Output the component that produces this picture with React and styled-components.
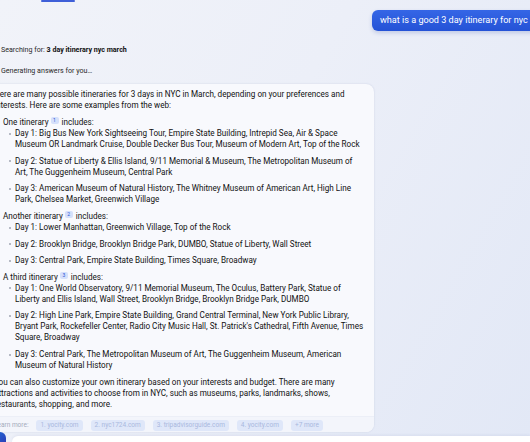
import React from 'react'
import styled, { createGlobalStyle } from 'styled-components'

const Global = createGlobalStyle`
  html, body {
    margin: 0;
    padding: 0;
  }
  body {
    font-family: Roboto, 'Liberation Sans', Arial, sans-serif;
  }
`

const Page = styled.div`
  width: 530px;
  height: 442px;
  overflow: hidden;
  position: relative;
  display: flex;
  flex-direction: column;
  background: linear-gradient(120deg, #f1f3f9 0%, #eceff8 45%, #e2e8f6 100%);
  color: #111;
`

const TabIndicator = styled.div`
  margin-left: 41px;
  width: 34px;
  height: 2px;
  border-radius: 1px;
  background: #3f5fd8;
`

const UserRow = styled.div`
  display: flex;
  padding-left: 372px;
  margin-top: 8px;
`

const Bubble = styled.div`
  flex: none;
  height: 21px;
  display: flex;
  align-items: center;
  padding: 0 10px 0 8px;
  border-radius: 6px;
  white-space: nowrap;
  font-size: 9.1px;
  color: #fff;
  background: linear-gradient(180deg, #3566e6 0%, #2452d6 100%);
  box-shadow: 0 2px 4px rgba(30, 60, 160, 0.2);
`

const Status = styled.div`
  margin: ${p => p.$top}px 0 0 1px;
  font-size: 7.1px;
  line-height: 11px;
  color: #2a2a2a;

  b {
    color: #111;
    font-weight: 700;
  }
`

const Card = styled.div`
  margin: 7.5px 0 0 -22px;
  width: 396px;
  border-radius: 0 8px 8px 8px;
  background: #f8f9fd;
  box-shadow: 0 0 2px rgba(80, 100, 150, 0.2);
  display: flex;
  flex-direction: column;
  overflow: hidden;
`

const Body = styled.div`
  padding: 5.5px 8px 6px 16px;
  font-size: 8.15px;
  line-height: 11px;
`

const Para = styled.p`
  margin: 0;
`

const Outer = styled.ul`
  list-style: none;
  margin: 5.7px 0;
  padding: 0 0 0 9px;
`

const OuterItem = styled.li`
  & + & {
    margin-top: 5.7px;
  }
`

const Inner = styled.ul`
  list-style: none;
  margin: 0;
  padding: 0 0 0 12px;
`

const InnerItem = styled.li`
  position: relative;
  margin-top: ${p => (p.$first ? 0 : 5.6)}px;

  &::before {
    content: '';
    position: absolute;
    left: -6px;
    top: 4.5px;
    width: 2px;
    height: 2px;
    border-radius: 50%;
    background: #a0a5b2;
  }
`

const Sup = styled.span`
  display: inline-block;
  vertical-align: 3px;
  margin: 0 3px 0 2px;
  min-width: 6px;
  height: 7px;
  line-height: 7px;
  padding: 0 1px;
  border-radius: 2px;
  background: #d5e0fb;
  color: #2c55d4;
  font-size: 5px;
  text-align: center;
`

const Footer = styled.div`
  display: flex;
  align-items: center;
  gap: 8px;
  height: 22px;
  padding: 2px 0 0 16px;
  border-top: 1px solid #eceff7;
  background: #f3f5fb;
  font-size: 6.5px;
  color: #a4abbb;
`

const Chip = styled.span`
  height: 11px;
  line-height: 11px;
  padding: 0 4px;
  border-radius: 3px;
  background: #dfe7f9;
  color: #a9b8de;
  white-space: nowrap;
`

const Bottom = styled.div`
  margin-top: auto;
  display: flex;
  align-items: flex-end;
  gap: 6px;
  height: 10px;
`

const NewTopic = styled.div`
  flex: none;
  margin-left: -6px;
  width: 12px;
  height: 10px;
  border-radius: 6px 6px 0 0;
  background: linear-gradient(135deg, #1f6bd8, #2b3fb8);
`

const InputBox = styled.div`
  flex: 1;
  height: 6px;
  border-radius: 6px 0 0 0;
  background: #ffffff;
  box-shadow: 0 -1px 3px rgba(60, 80, 140, 0.08);
`

const itineraries = [
  {
    label: 'One itinerary',
    n: 1,
    days: [
      'Day 1: Big Bus New York Sightseeing Tour, Empire State Building, Intrepid Sea, Air & Space Museum OR Landmark Cruise, Double Decker Bus Tour, Museum of Modern Art, Top of the Rock',
      'Day 2: Statue of Liberty & Ellis Island, 9/11 Memorial & Museum, The Metropolitan Museum of Art, The Guggenheim Museum, Central Park',
      'Day 3: American Museum of Natural History, The Whitney Museum of American Art, High Line Park, Chelsea Market, Greenwich Village',
    ],
  },
  {
    label: 'Another itinerary',
    n: 2,
    days: [
      'Day 1: Lower Manhattan, Greenwich Village, Top of the Rock',
      'Day 2: Brooklyn Bridge, Brooklyn Bridge Park, DUMBO, Statue of Liberty, Wall Street',
      'Day 3: Central Park, Empire State Building, Times Square, Broadway',
    ],
  },
  {
    label: 'A third itinerary',
    n: 3,
    days: [
      'Day 1: One World Observatory, 9/11 Memorial Museum, The Oculus, Battery Park, Statue of Liberty and Ellis Island, Wall Street, Brooklyn Bridge, Brooklyn Bridge Park, DUMBO',
      "Day 2: High Line Park, Empire State Building, Grand Central Terminal, New York Public Library, Bryant Park, Rockefeller Center, Radio City Music Hall, St. Patrick's Cathedral, Fifth Avenue, Times Square, Broadway",
      'Day 3: Central Park, The Metropolitan Museum of Art, The Guggenheim Museum, American Museum of Natural History',
    ],
  },
]

const sources = ['1. yocity.com', '2. nyc1724.com', '3. tripadvisorguide.com', '4. yocity.com', '+7 more']

const App = () => (
  <Page>
    <Global />
    <TabIndicator />
    <UserRow>
      <Bubble>what is a good 3 day itinerary for nyc in march</Bubble>
    </UserRow>
    <Status $top={13.5}>
      Searching for: <b>3 day itinerary nyc march</b>
    </Status>
    <Status $top={10}>Generating answers for you…</Status>
    <Card>
      <Body>
        <Para>
          Here are many possible itineraries for 3 days in NYC in March, depending on your preferences and
          interests. Here are some examples from the web:
        </Para>
        <Outer>
          {itineraries.map(it => (
            <OuterItem key={it.n}>
              {it.label}
              <Sup>{it.n}</Sup>
              includes:
              <Inner>
                {it.days.map((d, i) => (
                  <InnerItem key={i} $first={i === 0}>
                    {d}
                  </InnerItem>
                ))}
              </Inner>
            </OuterItem>
          ))}
        </Outer>
        <Para>
          You can also customize your own itinerary based on your interests and budget. There are many
          attractions and activities to choose from in NYC, such as museums, parks, landmarks, shows,
          restaurants, shopping, and more.
        </Para>
      </Body>
      <Footer>
        <span>Learn more:</span>
        {sources.map(s => (
          <Chip key={s}>{s}</Chip>
        ))}
      </Footer>
    </Card>
    <Bottom>
      <NewTopic />
      <InputBox />
    </Bottom>
  </Page>
)

export default App
